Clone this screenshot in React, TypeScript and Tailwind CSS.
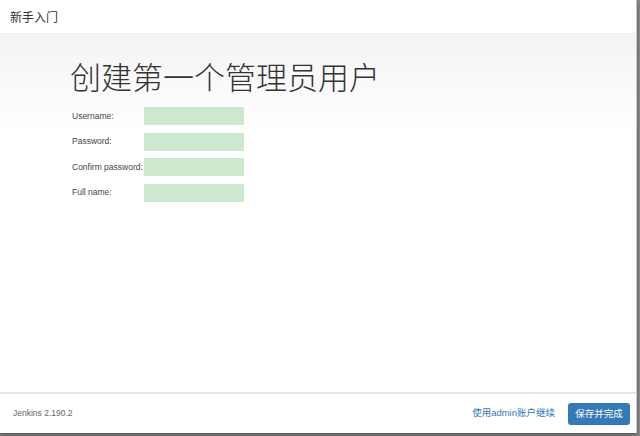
export default function App() {
  const fields = [
    { label: "Username:" },
    { label: "Password:" },
    { label: "Confirm password:" },
    { label: "Full name:" },
  ];

  return (
    <div
      className="h-[436px] w-[640px] overflow-hidden bg-[#8a8a8a]"
      style={{ fontFamily: '"Liberation Sans", Arial, "Noto Sans CJK SC", sans-serif' }}
    >
      <div className="flex h-[433px] w-[637px] flex-col border-r border-[#c8c8c8] bg-white shadow-[0_2px_4px_rgba(0,0,0,0.4)]">
        {/* Header */}
        <div className="flex h-[34px] shrink-0 items-center border-b border-[#efefef] px-[10px]">
          <span
            className="text-[12px] text-[#333]"
            style={{ fontFamily: '"Noto Sans CJK SC", sans-serif' }}
          >
            新手入门
          </span>
        </div>

        {/* Body */}
        <div className="flex-1 bg-gradient-to-b from-[#f4f4f4] to-white to-[28%] pl-[70px] pt-[20px]">
          <h1
            className="text-[31px] font-light leading-[44px] text-[#333]"
            style={{ fontFamily: '"Noto Sans CJK SC", sans-serif' }}
          >
            创建第一个管理员用户
          </h1>
          <div className="mt-[9px] flex flex-col gap-[7.5px] pl-[2px]">
            {fields.map((f) => (
              <div key={f.label} className="flex h-[18px] items-center">
                <span className="w-[72px] whitespace-nowrap text-[8.5px] text-[#444]">{f.label}</span>
                <div className="h-[18px] w-[100px] bg-[#cce8cf]" />
              </div>
            ))}
          </div>
        </div>

        {/* Footer */}
        <div className="flex h-[41px] shrink-0 items-center justify-between border-t-2 border-[#e6e6e6] pl-[13px] pr-[6px]">
          <span className="text-[8.5px] text-[#666]">Jenkins 2.190.2</span>
          <div className="flex items-center gap-[13px]">
            <span className="text-[9.5px] text-[#337ab7]">
              使用admin账户继续
            </span>
            <button
              className="flex h-[22px] w-[62px] items-center justify-center rounded-[3px] bg-[#337ab7] text-[9.5px] text-white"
              style={{ fontFamily: '"Noto Sans CJK SC", sans-serif' }}
            >
              保存并完成
            </button>
          </div>
        </div>
      </div>
    </div>
  );
}
